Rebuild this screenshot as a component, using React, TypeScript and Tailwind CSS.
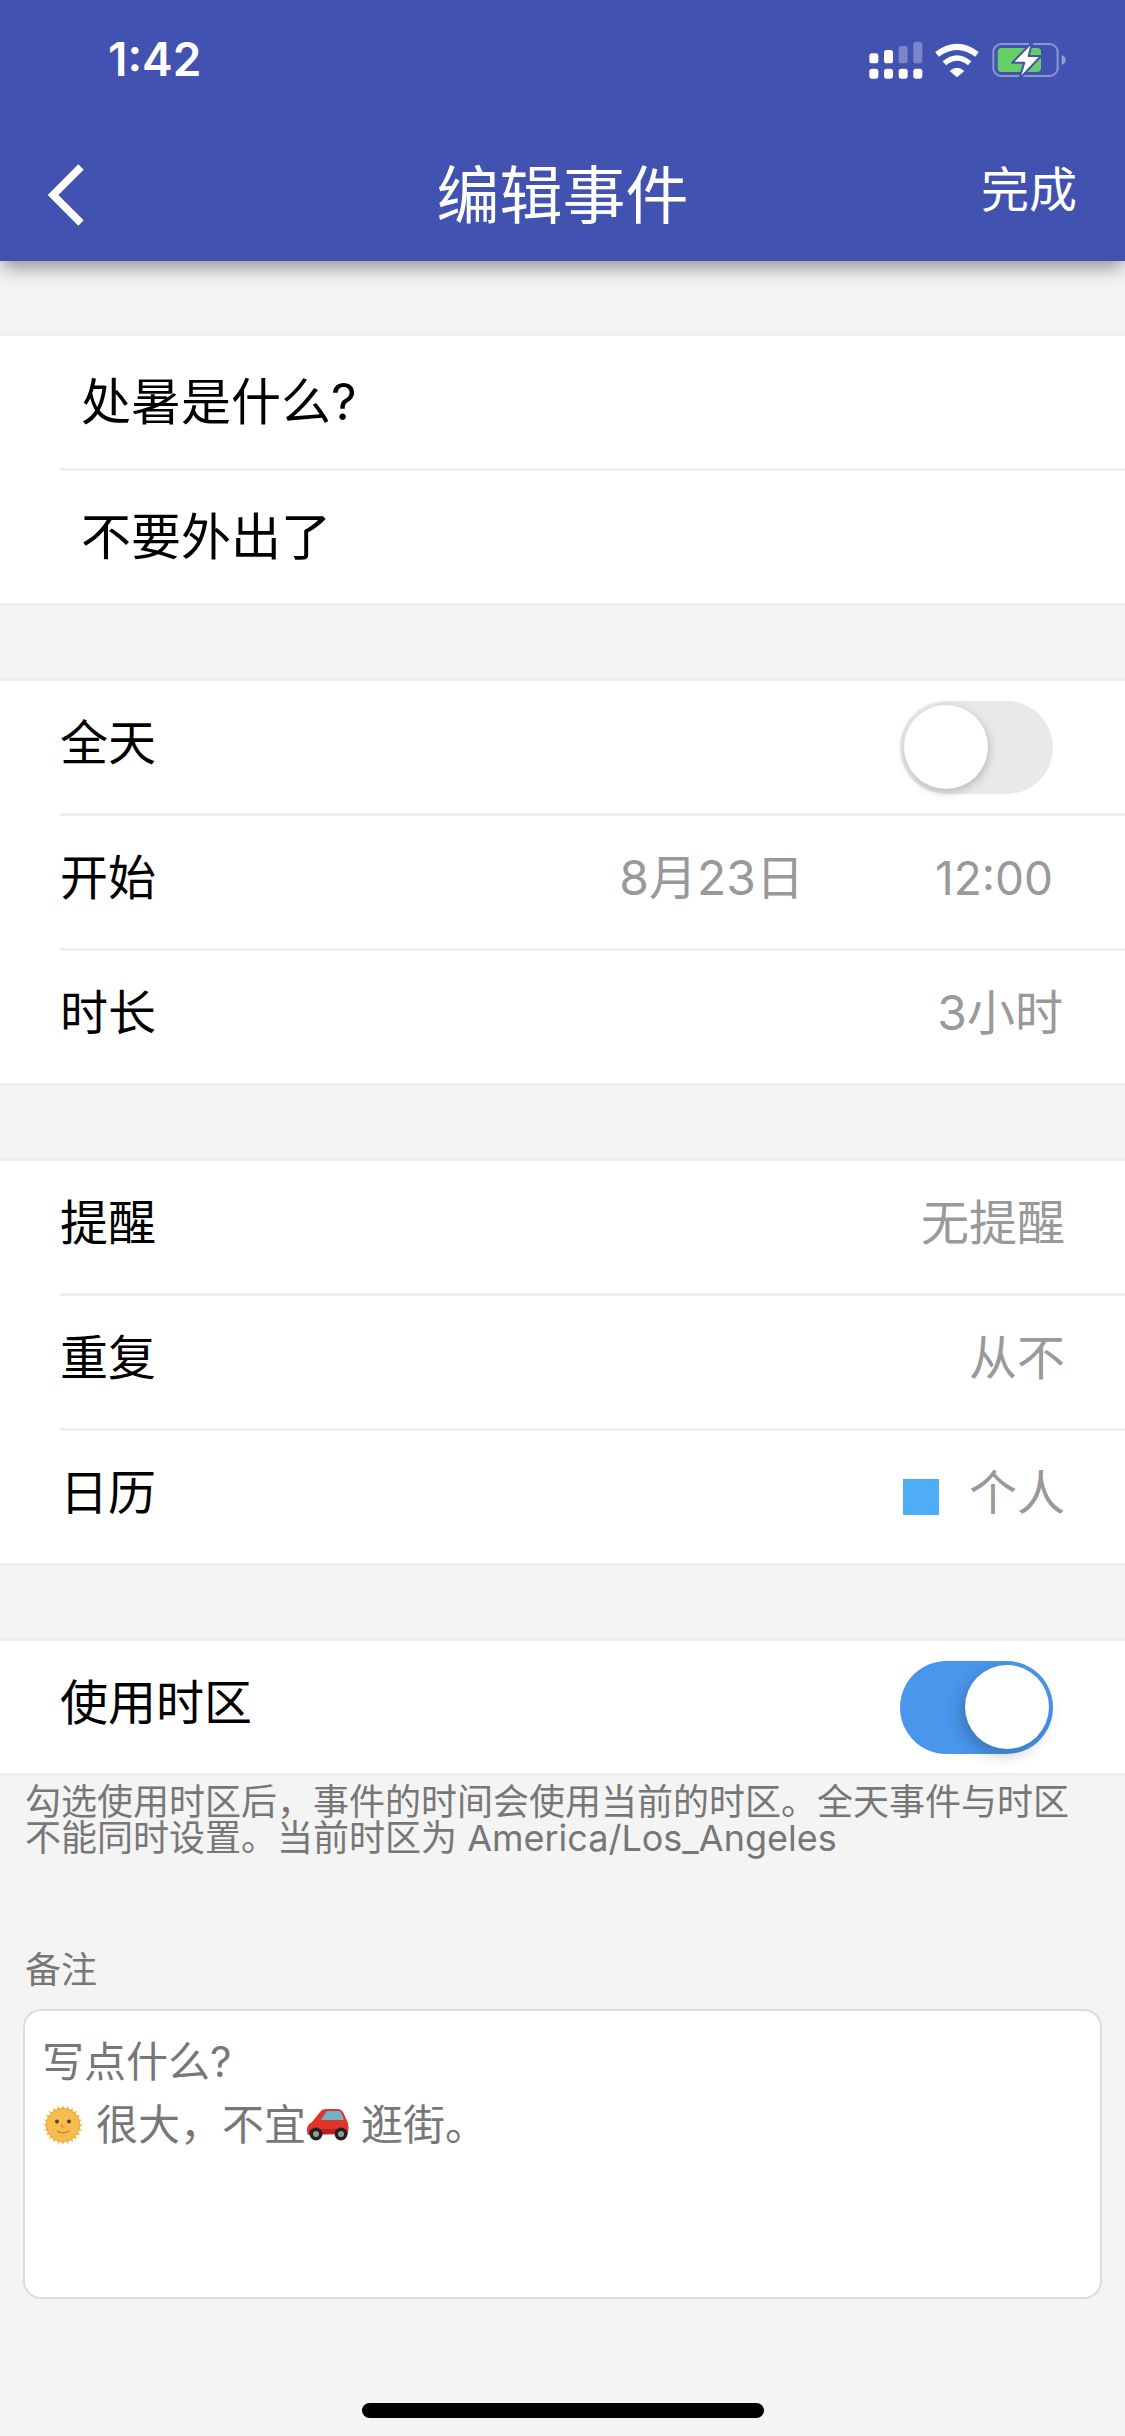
const sans = 'font-["Inter","Noto_Sans_CJK_SC",sans-serif]';

function StatusIcons() {
  return (
    <svg width="300" height="70" viewBox="0 0 900 210" className="block">
      <g fill="#fff">
        <rect x="133" y="146" width="27" height="30" rx="8" />
        <rect x="177" y="146" width="27" height="30" rx="8" />
        <rect x="221" y="146" width="27" height="30" rx="8" />
        <rect x="265" y="146" width="27" height="30" rx="8" />
        <rect x="133" y="100" width="27" height="30" rx="8" />
        <rect x="177" y="90" width="27" height="40" rx="8" />
        <rect x="221" y="78" width="27" height="52" rx="8" opacity="0.3" />
        <rect x="265" y="65" width="27" height="65" rx="8" opacity="0.3" />
      </g>
      <path d="M336 103 Q396 58 456 103" fill="none" stroke="#fff" strokeWidth="18" />
      <path d="M358 130 Q396 98 434 130" fill="none" stroke="#fff" strokeWidth="16" />
      <path d="M374 153 Q396 134 418 153 L396 172 Z" fill="#fff" />
      <rect x="505" y="72" width="193" height="96" rx="24" fill="none" stroke="#fff" strokeOpacity="0.4" strokeWidth="6" />
      <path d="M710 105 Q722 110 722 120 Q722 130 710 135 Z" fill="#fff" fillOpacity="0.45" />
      <rect x="518" y="84" width="130" height="72" rx="12" fill="#65CE65" />
      <path d="M622 66 L562 128 L598 128 L582 178 L648 108 L611 108 Z" fill="#fff" stroke="#4152B0" strokeWidth="6" strokeLinejoin="round" />
    </svg>
  );
}

function Toggle({ on }: { on: boolean }) {
  return on ? (
    <div className="flex h-[93px] w-[153px] items-center justify-end rounded-full bg-[#4A96EC] pr-[4px]">
      <div className="h-[84px] w-[84px] rounded-full bg-white shadow-[-4px_6px_16px_rgba(0,0,0,0.22)]" />
    </div>
  ) : (
    <div className="flex h-[93px] w-[153px] items-center justify-start rounded-full bg-[#E9E9E9] pl-[4px]">
      <div className="h-[84px] w-[84px] rounded-full bg-white shadow-[1px_3px_10px_rgba(0,0,0,0.22)]" />
    </div>
  );
}

function Row({ label, last, right, pad }: { label: string; last?: boolean; right?: React.ReactNode; pad?: string }) {
  return (
    <div className="pl-[60px]">
      <div className={`flex items-center justify-between ${last ? "h-[132px]" : "h-[135px] border-b-[3px] border-[#EEEEEE]"} ${pad ?? ""}`}>
        <span className="mb-[8px] text-[48px] leading-none text-black">{label}</span>
        {right}
      </div>
    </div>
  );
}

function TitleRow({ text, last }: { text: string; last?: boolean }) {
  return (
    <div className="pl-[60px]">
      <div className={`flex items-center pl-[21px] ${last ? "h-[132px]" : "h-[135px] border-b-[3px] border-[#EEEEEE]"}`}>
        <span className="text-[50px] leading-none text-black">{text}</span>
      </div>
    </div>
  );
}

function Value({ children }: { children: React.ReactNode }) {
  return <span className="mb-[8px] text-[48px] leading-none text-[#999999]">{children}</span>;
}

function Section({ children }: { children: React.ReactNode }) {
  return <section className="border-y-[3px] border-[#EEEEEE] bg-white">{children}</section>;
}

function Sun() {
  const rays = Array.from({ length: 24 }, (_, i) => i * 15);
  return (
    <svg width="40" height="40" viewBox="0 0 40 40" className="ml-[1px] inline-block shrink-0">
      {rays.map((a) => (
        <path key={a} d="M20 0 L22 5 L18 5 Z" fill="#F7B733" transform={`rotate(${a} 20 20)`} />
      ))}
      <circle cx="20" cy="20" r="16.5" fill="#F5BC50" />
      <circle cx="20" cy="20" r="16.5" fill="none" stroke="#E8A83A" strokeWidth="1" />
      <circle cx="14" cy="16.5" r="2" fill="#5A4230" />
      <circle cx="26" cy="16.5" r="2" fill="#5A4230" />
      <path d="M19 19 L18.5 22 L21.5 22" fill="none" stroke="#C98A2E" strokeWidth="1" />
      <path d="M14 26 Q20 30 26 26" fill="none" stroke="#B67A2A" strokeWidth="1.2" />
    </svg>
  );
}

function Car() {
  return (
    <svg width="43" height="33" viewBox="0 0 43 33" className="inline-block shrink-0">
      <path d="M1 24 Q0 17 6 14 L14 4 Q16 1 20 1 L31 1 Q36 1 38 6 L42 15 Q43 20 42 26 L2 27 Z" fill="#E2352A" />
      <path d="M15 12 L20 4 Q21 3 23 3 L33 3 Q35 3 36 6 L38 12 Z" fill="#6FB2C6" />
      <rect x="3" y="21" width="38" height="5" rx="2" fill="#B8241C" />
      <circle cx="10" cy="26" r="6.5" fill="#222" />
      <circle cx="10" cy="26" r="3" fill="#999" />
      <circle cx="35" cy="26" r="6.5" fill="#222" />
      <circle cx="35" cy="26" r="3" fill="#999" />
    </svg>
  );
}

export default function App() {
  return (
    <div className={`${sans} flex h-[2436px] w-[1125px] flex-col overflow-hidden bg-[#F4F4F4]`}>
      <header className="relative z-10 h-[261px] bg-[#4152B0] text-white shadow-[0_8px_18px_-2px_rgba(0,0,0,0.42)]">
        <div className="flex h-[129px] items-start justify-between">
          <span className="ml-[108px] mt-[31px] text-[46px] font-semibold leading-[56px]">1:42</span>
          <div className="mt-[20px]">
            <StatusIcons />
          </div>
        </div>
        <nav className="flex h-[132px] items-center">
          <div className="w-[170px] pl-[46px]">
            <svg width="40" height="64" viewBox="0 0 40 64" className="block">
              <path d="M35 4 L7 32 L35 60" fill="none" stroke="#fff" strokeWidth="7.5" />
            </svg>
          </div>
          <h1 className="flex-1 text-center text-[63px] font-normal leading-none">编辑事件</h1>
          <div className="w-[170px] pr-[48px] pb-[10px] text-right text-[48px] leading-none">完成</div>
        </nav>
      </header>

      <main className="flex flex-1 flex-col pt-[72px]">
        <Section>
          <TitleRow text="处暑是什么?" />
          <TitleRow text="不要外出了" last />
        </Section>

        <div className="mt-[72px]">
          <Section>
            <Row label="全天" pad="pr-[72px]" right={<Toggle on={false} />} />
            <Row
              label="开始"
              pad="pr-[72px]"
              right={
                <div className="flex items-center gap-[131px]">
                  <Value>8月23日</Value>
                  <span className="mb-[8px] text-[46px] leading-none text-[#999999]">12:00</span>
                </div>
              }
            />
            <Row label="时长" last pad="pr-[62px]" right={<Value>3小时</Value>} />
          </Section>
        </div>

        <div className="mt-[72px]">
          <Section>
            <Row label="提醒" pad="pr-[60px]" right={<Value>无提醒</Value>} />
            <Row label="重复" pad="pr-[60px]" right={<Value>从不</Value>} />
            <Row
              label="日历"
              last
              pad="pr-[60px]"
              right={
                <div className="flex items-center gap-[30px]">
                  <div className="h-[36px] w-[36px] bg-[#4FADF7]" />
                  <Value>个人</Value>
                </div>
              }
            />
          </Section>
        </div>

        <div className="mt-[72px]">
          <Section>
            <Row label="使用时区" last pad="pr-[72px]" right={<Toggle on />} />
          </Section>
        </div>

        <p className="pl-[25px] pr-[50px] pt-[8px] text-[36px] leading-[36px] text-[#777777]">
          勾选使用时区后，事件的时间会使用当前的时区。全天事件与时区不能同时设置。当前时区为 America/Los_Angeles
        </p>

        <div className="pl-[25px] pt-[89px] text-[36px] leading-[50px] text-[#777777]">备注</div>

        <div className="mx-[23px] mt-[14px] h-[290px] rounded-[18px] border-[2px] border-[#DDDDDD] bg-white pl-[17px] pr-[18px] pt-[19px] text-[42px] leading-[63px] text-[#777777]">
          <div>写点什么?</div>
          <div className="flex items-center">
            <Sun />
            <span className="ml-[13px]">很大，不宜</span>
            <Car />
            <span className="ml-[12px]">逛街。</span>
          </div>
        </div>

        <div className="mt-auto flex justify-center pb-[18px]">
          <div className="h-[15px] w-[402px] rounded-full bg-black" />
        </div>
      </main>
    </div>
  );
}
